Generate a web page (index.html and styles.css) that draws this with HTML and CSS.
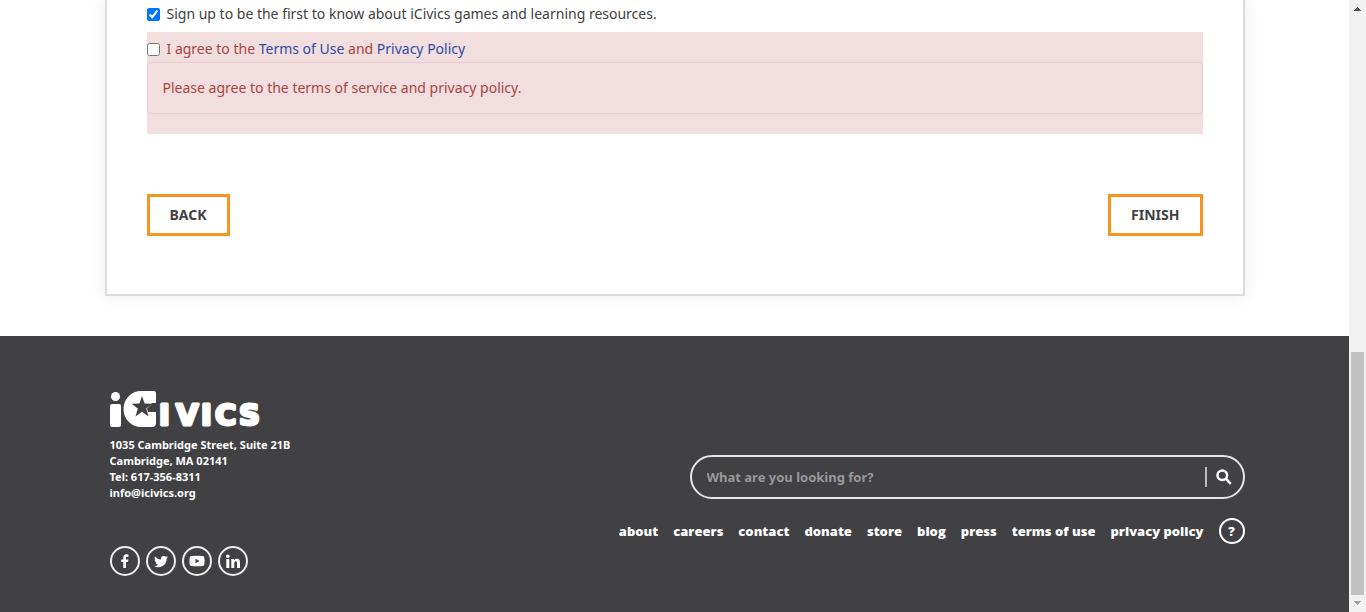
FILE: index.html
```html
<!DOCTYPE html>
<html lang="en">
<head>
<meta charset="utf-8">
<title>iCivics</title>
<link rel="stylesheet" href="styles.css">
</head>
<body>
<div class="window">
  <div class="page">
    <main class="container">
      <form class="card">
        <div class="check-row">
          <input type="checkbox" id="signup" checked>
          <label for="signup">Sign up to be the first to know about iCivics games and learning resources.</label>
        </div>
        <div class="error-group">
          <div class="check-row check-row-error">
            <input type="checkbox" id="agree">
            <label for="agree">I agree to the <a href="#">Terms of Use</a> and <a href="#">Privacy Policy</a></label>
          </div>
          <div class="alert" role="alert">Please agree to the terms of service and privacy policy.</div>
        </div>
        <div class="actions">
          <button type="button" class="btn">BACK</button>
          <button type="button" class="btn">FINISH</button>
        </div>
      </form>
    </main>
    <footer class="footer">
      <div class="container footer-inner">
        <div class="contact">
          <svg class="logo" viewBox="0 0 152 38" role="img" aria-label="iCivics">
            <circle cx="5.500" cy="6.500" r="4.500"/>
            <rect x="0" y="14" width="11" height="23" rx="2"/>
            <path d="M31 1H44Q46 1 46 3V13H41.500V14.200L37 18.500L38 22H46V33Q46 37 42 37H31A17.500 18 0 0 1 31 1Z"/>
            <path class="star" d="M32 6L34.600 13.600L42.500 13.800L36.200 18.600L38.500 26.500L32 21.800L25.500 26.500L27.800 18.600L21.500 13.800L29.400 13.600Z"/>
            <text x="49 66 91 105 129" y="35">IVICS</text>
          </svg>
          <address>1035 Cambridge Street, Suite 21B<br>Cambridge, MA 02141<br>Tel: 617-356-8311<br>info@icivics.org</address>
          <div class="social">
            <a href="#" aria-label="Facebook"><svg viewBox="0 0 16 16"><path d="M6.3 15V9H4.2V6.4H6.3V4.7C6.3 2.5 7.6 1.3 9.6 1.3L11.5 1.4V3.7H10.2C9.2 3.7 9 4.2 9 4.9V6.4H11.4L11 9H9V15Z"/></svg></a>
            <a href="#" aria-label="Twitter"><svg viewBox="0 0 16 16"><path d="M15 4.2C14.5 4.5 14 4.6 13.4 4.7C14 4.3 14.4 3.8 14.6 3.1C14.1 3.4 13.4 3.7 12.8 3.8A2.9 2.9 0 0 0 7.9 6.4A8.2 8.2 0 0 1 2 3.4A2.9 2.9 0 0 0 2.9 7.2L1.6 6.8C1.6 8.2 2.6 9.4 3.9 9.7L2.6 9.7C3 10.9 4 11.7 5.3 11.7A5.8 5.8 0 0 1 1 12.9A8.2 8.2 0 0 0 13.6 5.7Z"/></svg></a>
            <a href="#" aria-label="YouTube"><svg viewBox="0 0 16 16"><path fill-rule="evenodd" d="M2.5 3Q8 2.4 13.5 3Q15.2 3.2 15.4 5Q15.8 8 15.4 11.2Q15.2 12.9 13.5 13.1Q8 13.5 2.5 13.1Q.8 12.9.6 11.2Q.2 8 .6 5Q.8 3.2 2.5 3ZM6.5 5.7V10.3L10.6 8Z"/></svg></a>
            <a href="#" aria-label="LinkedIn"><svg viewBox="0 0 16 16"><circle cx="2.8" cy="3.2" r="1.8"/><path d="M1.3 6H4.3V15H1.3ZM6.3 6H9.1V7.2C10.9 4.9 15 5.4 15 9.4V15H12V10C12 7.5 9.3 7.7 9.3 10V15H6.3Z"/></svg></a>
          </div>
        </div>
        <div class="site-tools">
          <div class="search">
            <input type="text" aria-label="Search" placeholder="What are you looking for?">
            <button type="button" aria-label="Search"><svg viewBox="0 0 16 16"><circle cx="6.3" cy="6.3" r="4.8"/><path d="M10 10L14.8 14.8"/></svg></button>
          </div>
          <nav class="links">
            <a href="#">about</a><a href="#">careers</a><a href="#">contact</a><a href="#">donate</a><a href="#">store</a><a href="#">blog</a><a href="#">press</a><a href="#">terms of use</a><a href="#">privacy policy</a><a href="#" class="help">?</a>
          </nav>
        </div>
      </div>
    </footer>
  </div>
  <div class="scrollbar" aria-hidden="true">
    <svg class="arrow-up" viewBox="0 0 7 4"><path d="M0 4V3H1V2H2V1H3V0H4V1H5V2H6V3H7V4Z"/></svg>
    <div class="thumb"></div>
    <svg class="arrow-down" viewBox="0 0 7 4"><path d="M0 0H7V1H6V2H5V3H4V4H3V3H2V2H1V1H0Z"/></svg>
  </div>
</div>
</body>
</html>
```
FILE: styles.css
```css
* { box-sizing: border-box; }
body { margin: 0; background: #fff; color: #414042; font: 14px/20px "Noto Sans", sans-serif; }
.window { display: flex; min-height: 100vh; }
.page { flex: 1; display: flex; flex-direction: column; }
.container { width: 100%; max-width: 1140px; margin: 0 auto; }
.card { padding: 4px 40px 58px; margin-bottom: 40px; border: 2px solid #dcdcdd; border-top: 0; box-shadow: 0 0 15px rgba(0, 0, 0, 0.08); }
.check-row { display: flex; align-items: center; gap: 7px; }
.check-row input { width: 13px; height: 13px; margin: 0; }
.error-group { margin-top: 8px; padding: 7px 0 20px; background: #f2dede; color: #a94442; }
.check-row-error { padding-bottom: 3px; }
a { color: #2f4ba0; text-decoration: none; }
.alert { padding: 15px; border: 1px solid #ebccd1; border-radius: 4px; }
.actions { display: flex; justify-content: space-between; margin-top: 60px; }
.btn { height: 42px; padding: 0 20px; border: 3px solid #f7941e; background: #fff; color: #414042; font: bold 14px/20px "Noto Sans", sans-serif; }
.footer { flex: 1; background: #414042; color: #fff; }
.footer-inner { display: flex; justify-content: space-between; padding: 54px 0 36px 5px; }
.logo { display: block; width: 152px; height: 38px; overflow: visible; fill: #fff; }
.logo .star { fill: #414042; }
.logo text { font: bold 29px "DejaVu Sans", sans-serif; stroke: #fff; stroke-width: 3px; stroke-linejoin: round; }
address { margin-top: 9px; font: bold 11px/16px "Noto Sans", sans-serif; }
.social { display: flex; gap: 6px; margin-top: 45px; }
.social a { display: grid; place-items: center; width: 30px; height: 30px; border: 2px solid #eee; border-radius: 50%; }
.social svg { width: 16px; height: 16px; fill: #fff; }
.site-tools { display: flex; flex-direction: column; align-items: flex-end; padding-top: 65px; }
.search { display: flex; align-items: center; width: 555px; height: 44px; padding: 0 11px 0 15px; border: 2px solid #e6e6e6; border-radius: 22px; }
.search input { flex: 1; min-width: 0; padding: 0; border: 0; background: transparent; color: #fff; font: bold 13px/20px "Noto Sans", sans-serif; }
.search input::placeholder { color: #999; opacity: 1; }
.search button { display: flex; padding: 2px 0 2px 9px; border: 0; border-left: 2px solid #bbb; background: none; }
.search svg { width: 16px; height: 16px; fill: none; stroke: #fff; stroke-width: 2.5px; }
.links { display: flex; align-items: center; gap: 15px; margin-top: 19px; }
.links a { color: #fff; font: 800 13px/20px "Open Sans", sans-serif; }
.links .help { display: grid; place-items: center; width: 26px; height: 26px; border: 2px solid #fff; border-radius: 50%; }
.scrollbar { display: flex; flex-direction: column; align-items: center; width: 17px; background: #f1f1f1; padding: 7px 0; }
.scrollbar svg { width: 7px; height: 4px; }
.arrow-up { fill: #505050; }
.arrow-down { fill: #a3a3a3; }
.thumb { width: 13px; height: 243px; margin: auto 0 6px; background: #c1c1c1; }
```
